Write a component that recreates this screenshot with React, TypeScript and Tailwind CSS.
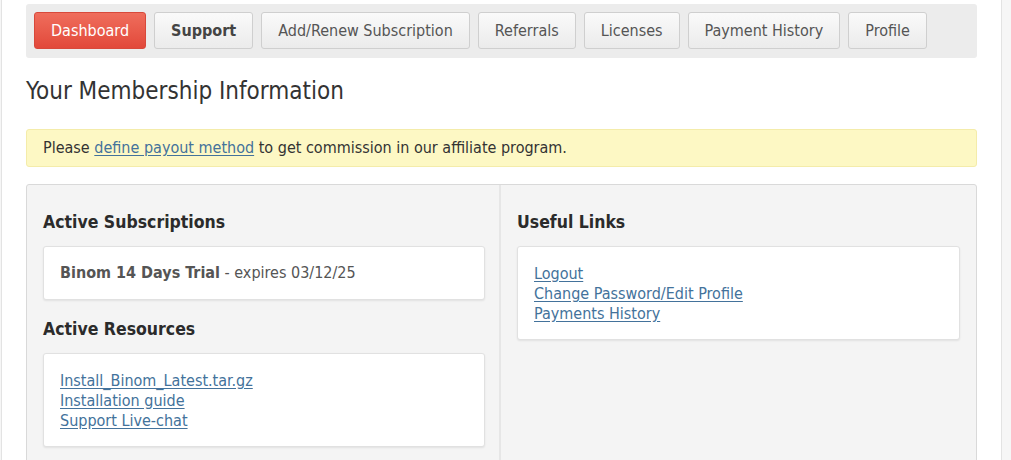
const tabs = [
  { label: 'Dashboard', active: true },
  { label: 'Support', bold: true },
  { label: 'Add/Renew Subscription' },
  { label: 'Referrals' },
  { label: 'Licenses' },
  { label: 'Payment History' },
  { label: 'Profile' },
];

const font = { fontFamily: '"DejaVu Sans Condensed", "DejaVu Sans", sans-serif' };

function LinkList({ links }: { links: string[] }) {
  return (
    <div className="bg-white border border-[#e1e1e1] rounded-[3px] shadow-[0_1px_2px_rgba(0,0,0,0.08)] px-[16px] pt-[17px] pb-[15px]">
      {links.map((l) => (
        <div key={l} className="leading-[20px]">
          <a href="#" className="text-[16px] text-[#43729b] underline underline-offset-2">
            {l}
          </a>
        </div>
      ))}
    </div>
  );
}

export default function App() {
  return (
    <div className="h-screen overflow-hidden bg-[#f6f6f6] text-[#333]" style={font}>
      <div className="ml-px w-[1001px] h-full bg-white border-l border-r border-[#e3e3e3] px-[24px] pt-[4px]">
        <nav className="bg-[#ececec] rounded-[3px] px-[8px] pt-[8px] pb-[9px] flex gap-[8px]">
          {tabs.map((t) => (
            <a
              key={t.label}
              href="#"
              className={
                t.active
                  ? 'h-[37px] px-[16px] flex items-center rounded-[3px] border border-[#d8493b] bg-gradient-to-b from-[#ef6d5c] to-[#e2483a] text-white text-[16px]'
                  : `h-[37px] px-[16px] flex items-center rounded-[3px] border border-[#cfcfcf] bg-gradient-to-b from-[#fafafa] to-[#ebebeb] text-[16px] ${
                      t.bold ? 'font-bold text-[#444]' : 'text-[#555]'
                    }`
              }
            >
              {t.label}
            </a>
          ))}
        </nav>

        <h1 className="text-[24px] leading-[30px] mt-[18px] text-[#333]">Your Membership Information</h1>

        <div className="mt-[23px] h-[38px] flex items-center px-[16px] bg-[#fdf8c4] border border-[#f4ecaa] rounded-[3px] text-[16px]">
          <span>
            Please{' '}
            <a href="#" className="text-[#43729b] underline underline-offset-2">
              define payout method
            </a>{' '}
            to get commission in our affiliate program.
          </span>
        </div>

        <div className="mt-[17px] bg-[#f4f4f4] border border-[#d9d9d9] rounded-[3px] flex h-[300px]">
          <div className="w-[474px] pl-[16px] pr-[14px] pt-[25px] border-r-2 border-[#e6e6e6]">
            <h2 className="text-[17.5px] font-bold leading-[24px] text-[#2b2b2b]">Active Subscriptions</h2>
            <div className="mt-[12px] h-[54px] flex items-center px-[16px] bg-white border border-[#e1e1e1] rounded-[3px] shadow-[0_1px_2px_rgba(0,0,0,0.08)] text-[16px] text-[#555]">
              <span>
                <b className="font-bold">Binom 14 Days Trial</b> - expires 03/12/25
              </span>
            </div>
            <h2 className="mt-[17px] text-[17.5px] font-bold leading-[24px] text-[#2b2b2b]">Active Resources</h2>
            <div className="mt-[12px]">
              <LinkList links={['Install_Binom_Latest.tar.gz', 'Installation guide', 'Support Live-chat']} />
            </div>
          </div>
          <div className="flex-1 pl-[16px] pr-[16px] pt-[25px]">
            <h2 className="text-[17.5px] font-bold leading-[24px] text-[#2b2b2b]">Useful Links</h2>
            <div className="mt-[12px]">
              <LinkList links={['Logout', 'Change Password/Edit Profile', 'Payments History']} />
            </div>
          </div>
        </div>
      </div>
    </div>
  );
}
